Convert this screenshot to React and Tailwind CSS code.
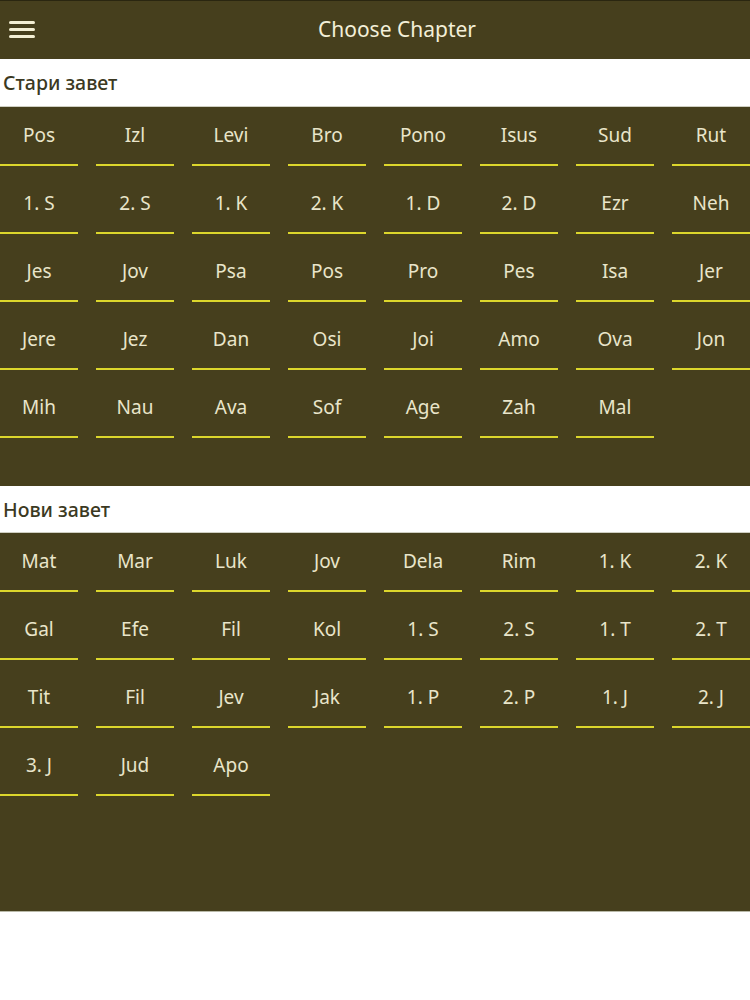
import React from "react";

const OT = [
  "Pos","Izl","Levi","Bro","Pono","Isus","Sud","Rut",
  "1. S","2. S","1. K","2. K","1. D","2. D","Ezr","Neh",
  "Jes","Jov","Psa","Pos","Pro","Pes","Isa","Jer",
  "Jere","Jez","Dan","Osi","Joi","Amo","Ova","Jon",
  "Mih","Nau","Ava","Sof","Age","Zah","Mal",
];
const NT = [
  "Mat","Mar","Luk","Jov","Dela","Rim","1. K","2. K",
  "Gal","Efe","Fil","Kol","1. S","2. S","1. T","2. T",
  "Tit","Fil","Jev","Jak","1. P","2. P","1. J","2. J",
  "3. J","Jud","Apo",
];

function Cell({ label }) {
  return (
    <div className="h-[68px] flex flex-col items-center">
      <div className="pt-[16px] h-[40px] leading-[24px] text-[19px] text-[#e9e5ca]">{label}</div>
      <div className="mt-[17px] h-[2px] w-full bg-[#dcd62c]" />
    </div>
  );
}

function Grid({ items, h }) {
  return (
    <div className={`bg-[#463f1d] ${h}`}>
      <div className="grid grid-cols-8 gap-x-[18px]">
        {items.map((b, i) => (
          <Cell key={i} label={b} />
        ))}
      </div>
    </div>
  );
}

function SectionHeader({ title, h }) {
  return (
    <div className={`bg-white ${h} flex items-center px-[3px] border-b border-[#cfcfc2]`}>
      <span className="text-[19.5px] font-medium text-[#3b3922] pt-[1px]">{title}</span>
    </div>
  );
}

export default function App() {
  return (
    <div
      className="w-[750px] h-[1000px] bg-white overflow-hidden"
      style={{ fontFamily: '"Noto Sans", "Open Sans", sans-serif' }}
    >
      <div className="h-[59px] bg-[#463f1d] border-t border-[#2a2610] relative flex items-center justify-center">
        <div className="absolute left-[9px] top-[20px] w-[26px] flex flex-col gap-[4px]">
          <div className="h-[3px] bg-[#f3efd4] rounded-sm" />
          <div className="h-[3px] bg-[#f3efd4] rounded-sm" />
          <div className="h-[3px] bg-[#f3efd4] rounded-sm" />
        </div>
        <span className="text-[21px] text-[#f3efd8] pl-[44px]">Choose Chapter</span>
      </div>
      <SectionHeader title="Стари завет" h="h-[48px]" />
      <Grid items={OT} h="h-[379px]" />
      <SectionHeader title="Нови завет" h="h-[47px]" />
      <Grid items={NT} h="h-[378px]" />
      <div className="h-px bg-[#b9b9a8]" />
    </div>
  );
}
